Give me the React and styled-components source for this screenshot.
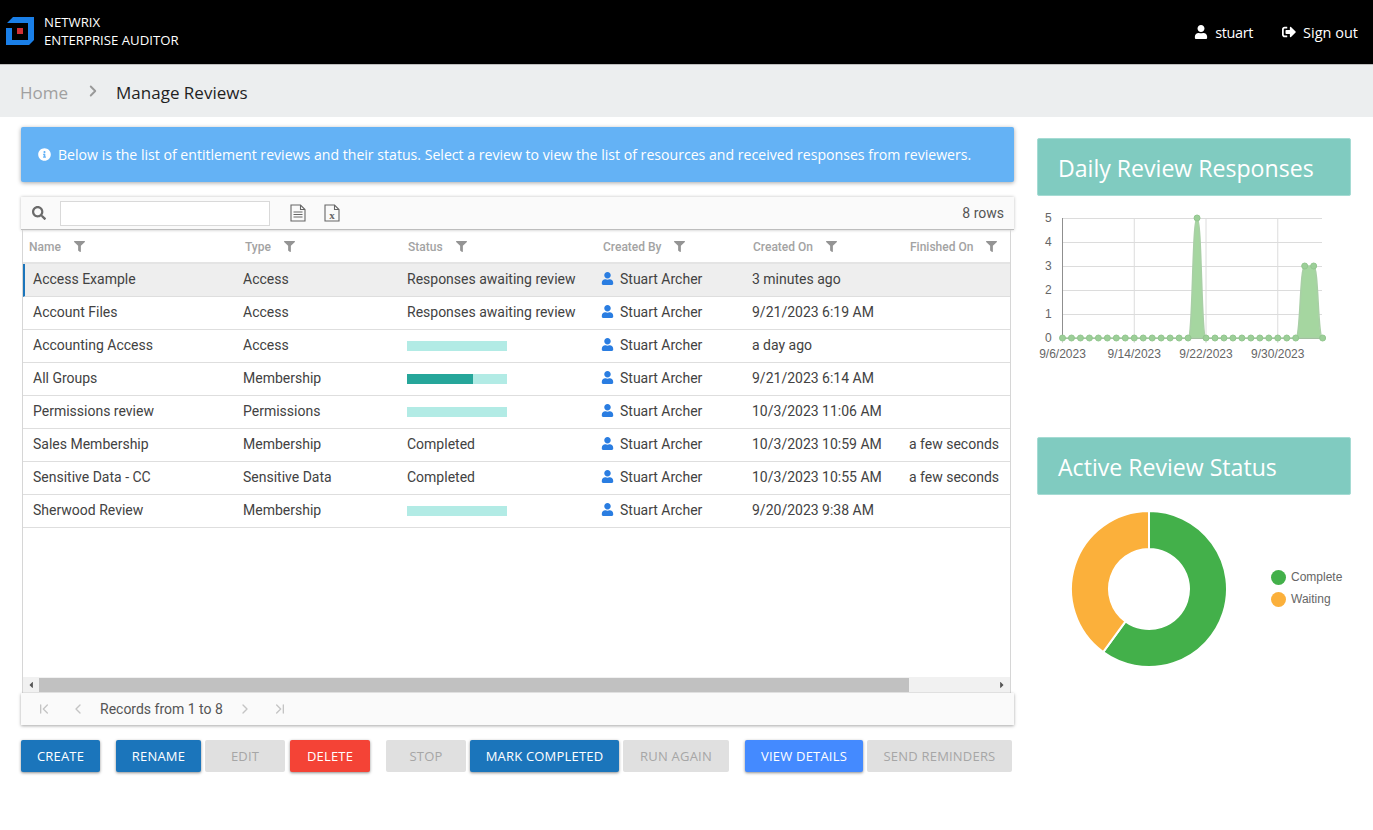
import React from 'react';
import styled, { createGlobalStyle } from 'styled-components';
import { FaUser, FaSignOutAlt, FaInfoCircle, FaSearch, FaFilter, FaCaretLeft, FaCaretRight } from 'react-icons/fa';
import { ChevronFirst, ChevronLast, ChevronLeft, ChevronRight } from 'lucide-react';

const GlobalStyle = createGlobalStyle`
  html, body {
    margin: 0;
    padding: 0;
    background: #fff;
    overflow: hidden;
  }
  * {
    box-sizing: border-box;
  }
`;

const Page = styled.div`
  width: 1373px;
  height: 830px;
  font-family: 'Open Sans', 'Liberation Sans', sans-serif;
`;

// Top bar

const Header = styled.header`
  height: 65px;
  background: #000;
  border-bottom: 1px solid #bdbdbd;
  color: #fff;
  display: flex;
  align-items: center;
  padding: 0 15px 0 6px;
`;

const Brand = styled.div`
  display: flex;
  align-items: center;
  gap: 10px;
  flex: 1;
  padding-bottom: 2px;
`;

const BrandText = styled.div`
  font-size: 13.2px;
  line-height: 18px;
  font-weight: 500;
`;

const UserLink = styled.a`
  display: flex;
  align-items: center;
  font-size: 14.5px;
  letter-spacing: ${(props) => (props.tight ? '-0.4px' : '0')};
  color: #fff;
  gap: 7px;
  margin-left: 29px;

  svg {
    font-size: 14px;
  }
`;

const Breadcrumb = styled.nav`
  height: 52px;
  background: #eceeef;
  display: flex;
  align-items: center;
  padding: 2px 0 0 20px;
  font-size: 17px;
`;

const Crumb = styled.span`
  color: ${(props) => (props.active ? '#1f1f1f' : '#a0a0a0')};
`;

const CrumbArrow = styled.span`
  display: flex;
  color: #999;
  margin: 0 14px 2px 16px;
`;

// Main layout

const Content = styled.main`
  display: flex;
  padding: 10px 22px 0 21px;
  gap: 23px;
`;

const LeftColumn = styled.div`
  width: 993px;
  flex: none;
`;

const RightColumn = styled.div`
  flex: 1;
  padding-top: 11px;
`;

const Alert = styled.div`
  height: 55px;
  background: #64b2f5;
  color: #fff;
  border-radius: 2px;
  box-shadow: 0 1px 4px rgba(0, 0, 0, 0.35);
  display: flex;
  align-items: center;
  gap: 7px;
  padding: 0 0 1px 17px;
  font-size: 14.12px;
  margin-bottom: 15px;
`;

// Grid

const Toolbar = styled.div`
  height: 33px;
  background: #fafafa;
  border-bottom: 1px solid #bdbdbd;
  box-shadow: 0 0 3px rgba(0, 0, 0, 0.25);
  display: flex;
  align-items: center;
  padding: 0 10px 0 11px;
`;

const SearchIcon = styled.span`
  display: flex;
  color: #6b6b6b;
  font-size: 14px;
`;

const SearchInput = styled.input`
  width: 210px;
  height: 25px;
  margin: 0 20px 0 14px;
  border: 1px solid #d9d9d9;
  background: #fff;
  outline: none;
`;

const ExportIcon = styled.svg`
  width: 16px;
  height: 18px;
  margin-right: 18px;
`;

const ExportGlyph = styled.text`
  font-family: 'Liberation Serif', serif;
  font-size: 11px;
  font-weight: 700;
  fill: #666;
  stroke: none;
`;

const RowCount = styled.span`
  margin-left: auto;
  font-family: Roboto, sans-serif;
  font-size: 14px;
  color: #555;
`;

const GridBody = styled.div`
  width: 989px;
  height: 463px;
  margin-left: 1px;
  border-left: 1px solid #d6d6d6;
  border-right: 1px solid #d6d6d6;
  font-family: Roboto, sans-serif;
  display: flex;
  flex-direction: column;
`;

const HeadRow = styled.div`
  display: grid;
  grid-template-columns: 216px 163px 195px 150px 157px 1fr;
  height: 34px;
  padding: 1px 0 0 6px;
  align-items: center;
  border-bottom: 2px solid #e4e4e4;
`;

const HeadCell = styled.div`
  display: flex;
  align-items: center;
  gap: 13px;
  font-size: 12px;
  font-weight: 500;
  color: #a3a3a3;

  svg {
    font-size: 11px;
    color: #949494;
  }
`;

const Rows = styled.div`
  flex: 1;
`;

const Row = styled.div`
  display: grid;
  grid-template-columns: 210px 164px 195px 150px 157px 1fr;
  height: 33px;
  align-items: center;
  font-size: 14px;
  color: #424242;
  border-bottom: 1px solid #dedede;
  padding-left: ${(props) => (props.selected ? '8px' : '10px')};
  padding-bottom: 3px;
  background: ${(props) => (props.selected ? '#eeeeee' : '#fff')};
  border-left: ${(props) => (props.selected ? '2px solid #1b75bb' : 'none')};
`;

const Cell = styled.div`
  white-space: nowrap;
`;

const OwnerCell = styled(Cell)`
  display: flex;
  align-items: center;
  gap: 6px;
  margin-left: -1px;

  svg {
    color: #2a7de1;
    font-size: 13px;
  }
`;

const Progress = styled.div`
  width: 100px;
  height: 10px;
  margin-top: 2px;
  background: #b2ebe5;
`;

const ProgressFill = styled.div`
  height: 100%;
  background: #26a69a;
`;

const ScrollBar = styled.div`
  height: 16px;
  background: #f1f1f1;
  display: flex;
  align-items: center;
  color: #555;
  font-size: 10px;
  border-bottom: 1px solid #e0e0e0;
`;

const ScrollArrow = styled.span`
  display: flex;
  width: 16px;
  flex: none;
  justify-content: center;
`;

const ScrollThumb = styled.div`
  width: 870px;
  height: 14px;
  background: #c1c1c1;
`;

const ScrollSpacer = styled.div`
  flex: 1;
`;

const Pager = styled.div`
  height: 32px;
  background: #fafafa;
  box-shadow: 0 1px 3px rgba(0, 0, 0, 0.35);
  display: flex;
  align-items: center;
  padding-left: 15px;
  font-family: Roboto, sans-serif;
  font-size: 14px;
  color: #555;
`;

const PagerIcon = styled.span`
  display: flex;
  color: #c4c4c4;
  margin-right: ${(props) => props.gap}px;
`;

const PagerLabel = styled.span`
  margin-right: 14px;
`;

// Action buttons

const Actions = styled.div`
  display: flex;
  margin-top: 15px;
`;

const ActionButton = styled.button`
  height: 32px;
  width: ${(props) => props.width}px;
  margin-right: ${(props) => props.gap || 0}px;
  flex: none;
  border: none;
  border-radius: 2px;
  padding: 0;
  font-family: 'Open Sans', sans-serif;
  font-size: 13px;
  letter-spacing: 0.2px;
  color: ${(props) => (props.bg ? '#fff' : '#a6a6a6')};
  background: ${(props) => props.bg || '#e0e0e0'};
  box-shadow: ${(props) => (props.bg ? '0 1px 3px rgba(0, 0, 0, 0.45)' : 'none')};
`;

// Right hand panels

const PanelTitle = styled.h2`
  margin: 0;
  height: 58px;
  background: #80cbc0;
  border: 1px solid #a5dbd3;
  border-radius: 2px;
  color: #fff;
  font-size: 23.1px;
  font-weight: 400;
  display: flex;
  align-items: center;
  padding: 2px 0 0 20px;
`;

const LineChart = styled.svg`
  display: block;
  width: 314px;
  height: 241px;
`;

const DonutWrap = styled.div`
  display: flex;
  align-items: center;
  padding-top: 15px;
`;

const Donut = styled.svg`
  width: 158px;
  height: 158px;
  margin-left: 33px;
  flex: none;
`;

const Legend = styled.div`
  margin: 0 0 2px 43px;
  display: flex;
  flex-direction: column;
  gap: 7px;
`;

const LegendItem = styled.div`
  display: flex;
  align-items: center;
  gap: 5px;
  font-family: 'Liberation Sans', sans-serif;
  font-size: 12px;
  color: #666;
`;

const LegendDot = styled.span`
  width: 15px;
  height: 15px;
  border-radius: 50%;
  background: ${(props) => props.color};
`;

const reviews = [
  { name: 'Access Example', type: 'Access', status: 'Responses awaiting review', created: '3 minutes ago', selected: true },
  { name: 'Account Files', type: 'Access', status: 'Responses awaiting review', created: '9/21/2023 6:19 AM' },
  { name: 'Accounting Access', type: 'Access', progress: 0, created: 'a day ago' },
  { name: 'All Groups', type: 'Membership', progress: 66, created: '9/21/2023 6:14 AM' },
  { name: 'Permissions review', type: 'Permissions', progress: 0, created: '10/3/2023 11:06 AM' },
  { name: 'Sales Membership', type: 'Membership', status: 'Completed', created: '10/3/2023 10:59 AM', finished: 'a few seconds' },
  { name: 'Sensitive Data - CC', type: 'Sensitive Data', status: 'Completed', created: '10/3/2023 10:55 AM', finished: 'a few seconds' },
  { name: 'Sherwood Review', type: 'Membership', progress: 0, created: '9/20/2023 9:38 AM' },
];

const columns = ['Name', 'Type', 'Status', 'Created By', 'Created On', 'Finished On'];

const Logo = () => (
  <svg width="28" height="28" viewBox="0 0 28 28">
    <path d="M1 6L7 0H28V23H22V6Z" fill="#1a7fe8" />
    <path d="M0 11H6V23H28L23 28H0Z" fill="#1a7fe8" />
    <rect x="11" y="11" width="6" height="6" fill="#d22f36" />
  </svg>
);

const FileIcon = ({ excel }) => (
  <ExportIcon viewBox="0 0 16 18" fill="none" stroke="#666" strokeWidth="1.1">
    <path d="M1 1H10.5L15 5.5V17H1Z" />
    <path d="M10.5 1V5.5H15" />
    {excel ? (
      <ExportGlyph x="8" y="15" textAnchor="middle">x</ExportGlyph>
    ) : (
      <path d="M3.5 8H12.5M3.5 10.5H12.5M3.5 13H12.5" />
    )}
  </ExportIcon>
);

// y value per day, starting at 9/6/2023
const responses = Array.from({ length: 30 }, (_, i) => {
  if (i === 15) return 5;
  if (i === 27 || i === 28) return 3;
  return 0;
});
const chartX = (i) => 25.5 + i * 8.97;
const chartY = (v) => 22 + (5 - v) * 24;
const ticks = [
  { label: '9/6/2023', day: 0 },
  { label: '9/14/2023', day: 8 },
  { label: '9/22/2023', day: 16 },
  { label: '9/30/2023', day: 24 },
];

const curvePath = () => {
  let d = `M${chartX(0)} ${chartY(0)}`;
  for (let i = 1; i < responses.length; i += 1) {
    const x0 = chartX(i - 1);
    const x1 = chartX(i);
    const y0 = chartY(responses[i - 1]);
    const y1 = chartY(responses[i]);
    const bend = y0 === y1 ? 0 : 5;
    d += ` C${x0 + bend} ${y0} ${x1 - bend} ${y1} ${x1} ${y1}`;
  }
  return d;
};

const ResponsesChart = () => (
  <LineChart viewBox="0 0 314 241">
    <g stroke="#dcdcdc" strokeWidth="1">
      {[0, 1, 2, 3, 4, 5].map((v) => (
        <line key={v} x1="25" x2="285" y1={chartY(v) + 0.5} y2={chartY(v) + 0.5} />
      ))}
      {ticks.map((t) => (
        <line key={t.day} x1={chartX(t.day)} x2={chartX(t.day)} y1="22" y2="147" />
      ))}
    </g>
    <line x1="25.5" x2="25.5" y1="22" y2="142" stroke="#8f8f8f" />
    <line x1="25" x2="285" y1="142.5" y2="142.5" stroke="#8f8f8f" />
    <path d={`${curvePath()} V142 H${chartX(0)} Z`} fill="#a5d6a0" stroke="#a9cfa6" strokeWidth="1.5" />
    {responses.map((v, i) => (
      <circle key={i} cx={chartX(i)} cy={chartY(v)} r="3" fill="#9ccf98" stroke="#93c78f" />
    ))}
    <g fill="#666" fontFamily="'Liberation Sans', sans-serif" fontSize="12">
      {[0, 1, 2, 3, 4, 5].map((v) => (
        <text key={v} x="8" y={chartY(v) + 4}>{v}</text>
      ))}
      {ticks.map((t) => (
        <text key={t.day} x={chartX(t.day)} y="162" textAnchor="middle">{t.label}</text>
      ))}
    </g>
  </LineChart>
);

const polar = (r, deg) => {
  const a = ((deg - 90) * Math.PI) / 180;
  return [79 + r * Math.cos(a), 79 + r * Math.sin(a)];
};

const arc = (from, to) => {
  const large = to - from > 180 ? 1 : 0;
  const [x1, y1] = polar(78, from);
  const [x2, y2] = polar(78, to);
  const [x3, y3] = polar(40, to);
  const [x4, y4] = polar(40, from);
  return `M${x1} ${y1} A78 78 0 ${large} 1 ${x2} ${y2} L${x3} ${y3} A40 40 0 ${large} 0 ${x4} ${y4} Z`;
};

const StatusDonut = () => (
  <Donut viewBox="0 0 158 158">
    <path d={arc(0, 216)} fill="#43b04a" stroke="#fff" strokeWidth="2" />
    <path d={arc(216, 360)} fill="#fbb03b" stroke="#fff" strokeWidth="2" />
  </Donut>
);

const App = () => (
  <Page>
    <GlobalStyle />
    <Header>
      <Brand>
        <Logo />
        <BrandText>
          NETWRIX
          <br />
          ENTERPRISE AUDITOR
        </BrandText>
      </Brand>
      <UserLink tight>
        <FaUser />
        stuart
      </UserLink>
      <UserLink>
        <FaSignOutAlt />
        Sign out
      </UserLink>
    </Header>
    <Breadcrumb>
      <Crumb>Home</Crumb>
      <CrumbArrow>
        <ChevronRight size={18} strokeWidth={2.5} />
      </CrumbArrow>
      <Crumb active>Manage Reviews</Crumb>
    </Breadcrumb>
    <Content>
      <LeftColumn>
        <Alert>
          <FaInfoCircle size={13} />
          Below is the list of entitlement reviews and their status. Select a review to view the list of resources and received responses from reviewers.
        </Alert>
        <Toolbar>
          <SearchIcon>
            <FaSearch />
          </SearchIcon>
          <SearchInput />
          <FileIcon />
          <FileIcon excel />
          <RowCount>8 rows</RowCount>
        </Toolbar>
        <GridBody>
          <HeadRow>
            {columns.map((c) => (
              <HeadCell key={c}>
                {c}
                <FaFilter />
              </HeadCell>
            ))}
          </HeadRow>
          <Rows>
            {reviews.map((r) => (
              <Row key={r.name} selected={r.selected}>
                <Cell>{r.name}</Cell>
                <Cell>{r.type}</Cell>
                <Cell>
                  {r.status || (
                    <Progress>
                      <ProgressFill style={{ width: `${r.progress}%` }} />
                    </Progress>
                  )}
                </Cell>
                <OwnerCell>
                  <FaUser />
                  Stuart Archer
                </OwnerCell>
                <Cell>{r.created}</Cell>
                <Cell>{r.finished}</Cell>
              </Row>
            ))}
          </Rows>
          <ScrollBar>
            <ScrollArrow>
              <FaCaretLeft />
            </ScrollArrow>
            <ScrollThumb />
            <ScrollSpacer />
            <ScrollArrow>
              <FaCaretRight />
            </ScrollArrow>
          </ScrollBar>
        </GridBody>
        <Pager>
          <PagerIcon gap={18}>
            <ChevronFirst size={16} />
          </PagerIcon>
          <PagerIcon gap={14}>
            <ChevronLeft size={16} />
          </PagerIcon>
          <PagerLabel>Records from 1 to 8</PagerLabel>
          <PagerIcon gap={19}>
            <ChevronRight size={16} />
          </PagerIcon>
          <PagerIcon>
            <ChevronLast size={16} />
          </PagerIcon>
        </Pager>
        <Actions>
          <ActionButton width={79} gap={16} bg="#1b75bb">CREATE</ActionButton>
          <ActionButton width={85} gap={4} bg="#1b75bb">RENAME</ActionButton>
          <ActionButton width={80} gap={5}>EDIT</ActionButton>
          <ActionButton width={80} gap={16} bg="#f44336">DELETE</ActionButton>
          <ActionButton width={80} gap={4}>STOP</ActionButton>
          <ActionButton width={149} gap={4} bg="#1b75bb">MARK COMPLETED</ActionButton>
          <ActionButton width={106} gap={16}>RUN AGAIN</ActionButton>
          <ActionButton width={118} gap={4} bg="#448aff">VIEW DETAILS</ActionButton>
          <ActionButton width={145}>SEND REMINDERS</ActionButton>
        </Actions>
      </LeftColumn>
      <RightColumn>
        <PanelTitle>Daily Review Responses</PanelTitle>
        <ResponsesChart />
        <PanelTitle>Active Review Status</PanelTitle>
        <DonutWrap>
          <StatusDonut />
          <Legend>
            <LegendItem>
              <LegendDot color="#43b04a" />
              Complete
            </LegendItem>
            <LegendItem>
              <LegendDot color="#fbb03b" />
              Waiting
            </LegendItem>
          </Legend>
        </DonutWrap>
      </RightColumn>
    </Content>
  </Page>
);

export default App;
